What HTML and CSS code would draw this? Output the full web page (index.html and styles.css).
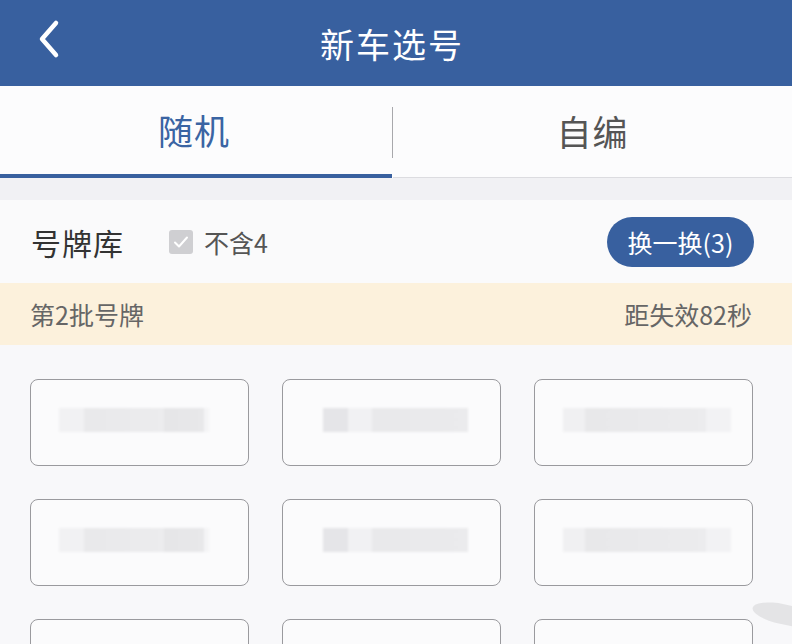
FILE: index.html
```html
<!DOCTYPE html>
<html lang="zh-CN">
<head>
  <meta charset="UTF-8" />
  <meta name="viewport" content="width=device-width, initial-scale=1.0" />
  <title>新车选号</title>
  <link rel="stylesheet" href="styles.css">
</head>
<body>
  <div class="page">
    <div class="header">
      <svg class="back" width="24" height="40" viewBox="0 0 24 40">
        <path d="M18 4 L4 20 L18 36" fill="none" stroke="#fff" stroke-width="4.5" stroke-linecap="round" stroke-linejoin="round"/>
      </svg>
      <h1 class="title">新车选号</h1>
    </div>

    <div class="tabs">
      <div class="tab active">随机</div>
      <div class="tab-divider"></div>
      <div class="tab">自编</div>
    </div>

    <div class="gap"></div>

    <div class="pool-row">
      <span class="pool-title">号牌库</span>
      <label class="check">
        <span class="check-box">
          <svg width="16" height="14" viewBox="0 0 16 14">
            <path d="M2 7.5 L6 11.5 L14 2.5" fill="none" stroke="#fff" stroke-width="2" stroke-linecap="round" stroke-linejoin="round"/>
          </svg>
        </span>
        不含4
      </label>
      <button class="swap-btn">换一换(3)</button>
    </div>

    <div class="batch-bar">
      <span>第2批号牌</span>
      <span>距失效82秒</span>
    </div>

    <div class="plates">
      <div class="plate"><div class="blur b1"></div></div>
      <div class="plate"><div class="blur b2"></div></div>
      <div class="plate"><div class="blur b3"></div></div>
      <div class="plate"><div class="blur b1"></div></div>
      <div class="plate"><div class="blur b2"></div></div>
      <div class="plate"><div class="blur b3"></div></div>
      <div class="plate"></div>
      <div class="plate"></div>
      <div class="plate"></div>
    </div>

    <div class="watermark"></div>
  </div>
</body>
</html>
```

FILE: styles.css
```css
* {
  box-sizing: border-box;
}

body {
  margin: 0;
  font-family: "Noto Sans CJK SC", "Noto Sans", sans-serif;
  background: #f8f8fa;
  overflow: hidden;
}

.page {
  position: relative;
  width: 792px;
  height: 644px;
  overflow: hidden;
}

.header {
  position: relative;
  height: 86px;
  background: #38609f;
  display: flex;
  align-items: center;
  justify-content: center;
}

.back {
  position: absolute;
  left: 38px;
  top: 19px;
}

.title {
  margin: 0;
  color: #fff;
  font-size: 34px;
  font-weight: 400;
  letter-spacing: 2px;
  margin-left: -8px;
}

.tabs {
  height: 92px;
  background: #fcfcfd;
  display: flex;
  align-items: stretch;
}

.tab {
  flex: 1;
  display: flex;
  align-items: center;
  justify-content: center;
  font-size: 35px;
  letter-spacing: 1px;
  color: #555;
  border-bottom: 1px solid #dcdce0;
  padding-bottom: 2px;
}

.tab.active {
  flex: none;
  width: 392px;
  color: #3a64a3;
  border-bottom: 4px solid #38609f;
  padding-right: 4px;
}

.tab-divider {
  width: 1px;
  margin: 21px 0 20px;
  background: #a8a8ac;
}

.gap {
  height: 22px;
  background: #f1f1f4;
}

.pool-row {
  height: 83px;
  background: #fafafb;
  display: flex;
  align-items: center;
  padding: 0 38px 0 31px;
}

.pool-title {
  font-size: 30px;
  letter-spacing: 1px;
  color: #333;
  margin-right: 45px;
}

.check {
  display: flex;
  align-items: center;
  gap: 11px;
  font-size: 25px;
  color: #555;
}

.check-box {
  width: 24px;
  height: 24px;
  border-radius: 3px;
  background: #cfcfd2;
  display: flex;
  align-items: center;
  justify-content: center;
}

.swap-btn {
  margin-left: auto;
  width: 147px;
  height: 50px;
  border: none;
  border-radius: 25px;
  background: #38609f;
  color: #fff;
  font-family: inherit;
  font-size: 25px;
  padding: 0;
}

.batch-bar {
  height: 62px;
  background: #fcf1dc;
  display: flex;
  align-items: center;
  justify-content: space-between;
  padding: 0 40px 0 30px;
  font-size: 25px;
  color: #666;
}

.plates {
  display: grid;
  grid-template-columns: repeat(3, 219px);
  grid-auto-rows: 87px;
  column-gap: 33px;
  row-gap: 33px;
  padding: 34px 0 0 30px;
}

.plate {
  border: 1px solid #9a9a9e;
  border-radius: 8px;
  background: #fbfbfc;
  padding: 28px 0 0 28px;
}

.blur {
  height: 24px;
  filter: blur(1px);
}

.b1 {
  width: 150px;
  background: linear-gradient(to right, #f1f1f3 0, #f1f1f3 17%, #e9e9eb 17%, #ececee 70%, #e6e6e8 70%, #e8e8ea 97%, #f4f4f6 97%);
}

.b2 {
  width: 145px;
  margin-left: 12px;
  background: linear-gradient(to right, #e5e5e8 0, #e5e5e8 17%, #f1f1f3 17%, #f1f1f3 34%, #e9e9eb 34%, #ebebed 100%);
}

.b3 {
  width: 168px;
  background: linear-gradient(to right, #f0f0f2 0, #f0f0f2 13%, #e8e8ea 13%, #ececee 85%, #f2f2f4 85%);
}

.watermark {
  position: absolute;
  right: -20px;
  bottom: 20px;
  width: 60px;
  height: 20px;
  border-radius: 50% 0 0 50%;
  background: #e4e4e6;
  transform: rotate(12deg);
}
```
